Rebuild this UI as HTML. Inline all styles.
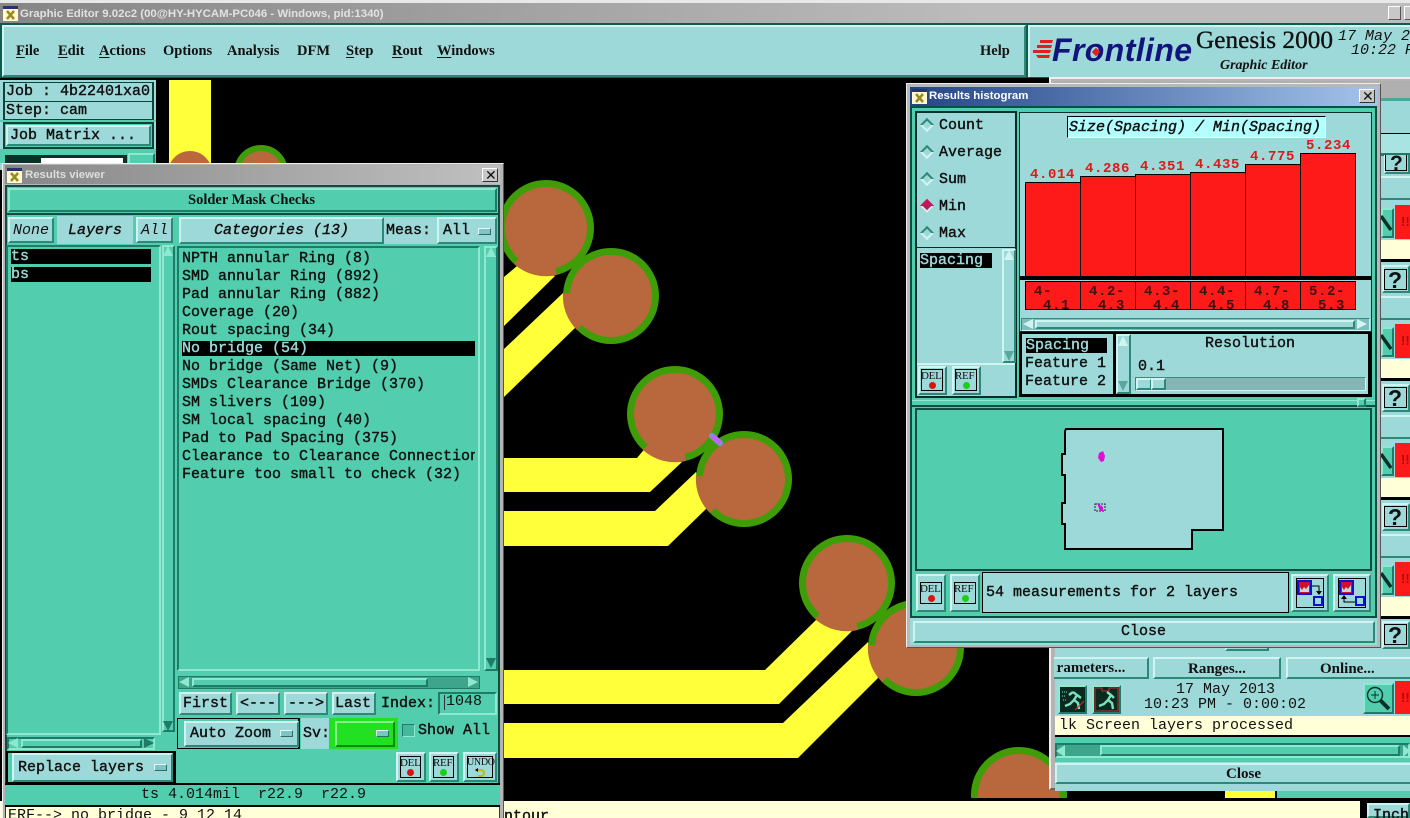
<!DOCTYPE html>
<html>
<head>
<meta charset="utf-8">
<style>
html,body{margin:0;padding:0;background:#000;}
#p{position:relative;width:1410px;height:818px;overflow:hidden;background:#000;}
#p div,#p svg,#p span.t{position:absolute;box-sizing:border-box;}
.t{white-space:pre;font:normal 15px/16px "Liberation Mono",monospace;color:#111;transform:translateY(1px);-webkit-text-stroke:.4px currentColor;}
.t[style*="font:"],.t[style*="font-weight:normal"],.val,.lab,.mi{-webkit-text-stroke:0;}
.n{font-weight:normal;-webkit-text-stroke:0;}
.i{font-style:italic;}
.l{background:#9ed9d9;}
.g{background:#52cdad;}
.y{background:#ffffd8;}
.k{background:#000;}
.bv{background:#9ed9d9;border:2px solid;border-color:#d0f4f2 #2e8878 #2e8878 #d0f4f2;}
.bg{background:#52cdad;border:2px solid;border-color:#8fe8d0 #1f7a68 #1f7a68 #8fe8d0;}
.in{background:#52cdad;border:2px solid;border-color:#1f7a68 #8fe8d0 #8fe8d0 #1f7a68;}
.dk{border:2px solid #0c4438;}
.dash{width:13px;height:7px;background:#7fc4c4;border:1px solid;border-color:#e4fbfa #2e6e60 #2e6e60 #e4fbfa;}
.tri{width:0;height:0;}
u{text-decoration:underline;text-underline-offset:2px;}
.mi{font:bold 14.5px/18px "Liberation Serif",serif;top:41px;color:#111;}
.rad{width:10px;height:10px;transform:rotate(45deg);background:#9ed9d9;border:2px solid;border-color:#2e8878 #d0f4f2 #d0f4f2 #2e8878;}
.lab{font:11px/10px "Liberation Serif",serif;color:#111;letter-spacing:-.3px;}
.red{background:#ff1a1a;}
.bar{background:#ff1a1a;border:1px solid #000;}
.val{color:#e01818;font:bold 14px/16px "Liberation Mono",monospace;letter-spacing:.6px;}
.ttl{font:bold 11.4px/16px "Liberation Sans",sans-serif;-webkit-text-stroke:0;}
.hd{stroke:#0a3028;stroke-width:3.5;}
</style>
</head>
<body>
<div id="p">

<!-- main title bar -->
<div style="left:0;top:0;width:1410px;height:3px;background:#e8e8e8"></div>
<div style="left:0;top:3px;width:1410px;height:20px;background:linear-gradient(90deg,#868686,#bcbcbc 70%,#bcbcbc)"></div>
<svg style="left:3px;top:6px" width="15" height="15" viewBox="0 0 15 15"><rect width="15" height="15" fill="#fff8d0"/><rect width="15" height="3" fill="#2a3070"/><path d="M4 5l7 8M11 5l-7 8" stroke="#9a8a20" stroke-width="2.5"/></svg>
<span class="t ttl" style="left:20px;top:5px;color:#e2e2e2;">Graphic Editor 9.02c2 (00@HY-HYCAM-PC046 - Windows, pid:1340)</span>
<div style="left:1388px;top:6px;width:13px;height:14px;background:#c8c8c8;border:1px solid;border-color:#fff #555 #555 #fff"></div>
<div style="left:1404px;top:6px;width:8px;height:14px;background:#c8c8c8;border:1px solid;border-color:#fff #555 #555 #fff"></div>

<!-- menu -->
<div style="left:0;top:23px;width:1410px;height:55px;background:#0d5c4e"></div>
<div class="l" style="left:2px;top:25px;width:1024px;height:52px;border:2px solid;border-color:#d0f4f2 #2e8878 #2e8878 #d0f4f2"></div>
<span class="t mi" style="left:16px"><u>F</u>ile</span>
<span class="t mi" style="left:58px"><u>E</u>dit</span>
<span class="t mi" style="left:99px"><u>A</u>ctions</span>
<span class="t mi" style="left:163px">Options</span>
<span class="t mi" style="left:227px">Analysis</span>
<span class="t mi" style="left:297px">DFM</span>
<span class="t mi" style="left:346px"><u>S</u>tep</span>
<span class="t mi" style="left:392px"><u>R</u>out</span>
<span class="t mi" style="left:437px"><u>W</u>indows</span>
<span class="t mi" style="left:980px">Help</span>

<!-- logo -->
<div class="l" style="left:1028px;top:25px;width:382px;height:52px;border-top:2px solid #d0f4f2;border-left:2px solid #d0f4f2"></div>
<svg style="left:1032px;top:38px" width="24" height="24" viewBox="0 0 24 24"><path d="M8 2h13l-1 3H8zM5 7h15l-1 3H5zM1 12h18l-1 3H1zM4 17h14l-1 3H6z" fill="#e02020"/></svg>
<span class="t" style="left:1052px;top:30px;font:italic bold 32px/38px 'Liberation Sans',sans-serif;color:#13137e;letter-spacing:.4px">Frontline</span>
<div style="left:1093px;top:49px;width:6px;height:6px;background:#e02020;transform:rotate(45deg)"></div>
<span class="t" style="left:1196px;top:24px;font:25.3px/30px 'Liberation Serif',serif;color:#111;-webkit-text-stroke:.35px #111">Genesis 2000</span>
<span class="t" style="left:1220px;top:57px;font:italic bold 14px/16px 'Liberation Serif',serif">Graphic Editor</span>
<span class="t" style="left:1338px;top:28px;font:italic 15px/16px 'Liberation Mono',monospace">17 May 2</span>
<span class="t" style="left:1351px;top:42px;font:italic 15px/16px 'Liberation Mono',monospace">10:22 P</span>

<!-- left column -->
<div class="l" style="left:0;top:80px;width:156px;height:90px"></div>
<div class="l dk" style="left:3px;top:82px;width:151px;height:20px;border-width:1px 2px"></div>
<span class="t" style="left:6px;top:83px">Job : 4b22401xa0</span>
<div class="l dk" style="left:3px;top:101px;width:151px;height:19px;border-width:1px 2px"></div>
<span class="t" style="left:6px;top:102px">Step: cam</span>
<div class="g" style="left:0;top:120px;width:156px;height:2px"></div>
<div class="g dk" style="left:3px;top:122px;width:151px;height:27px"></div>
<div class="bv" style="left:6px;top:125px;width:145px;height:21px"></div>
<span class="t" style="left:10px;top:127px">Job Matrix ...</span>
<div class="g" style="left:0;top:149px;width:156px;height:14px"></div>
<div style="left:5px;top:155px;width:122px;height:10px;background:#0a3028"></div>
<div style="left:41px;top:158px;width:82px;height:6px;background:#fff"></div>
<div class="bg" style="left:128px;top:153px;width:27px;height:12px"></div>

<!-- canvas -->
<svg style="left:156px;top:80px" width="1254" height="718" viewBox="156 80 1254 718">
 <rect x="156" y="80" width="1254" height="718" fill="#000"/>
 <g fill="#ffff3a">
  <rect x="169" y="80" width="42" height="90"/>
  <path d="M400 277H504L517 266L555 276L504 326H400z"/>
  <path d="M400 349H504L563 293L575 328L504 397H400z"/>
  <path d="M400 458H637L647 446L682 462L650 492H400z"/>
  <path d="M400 511H655L696 472L707 508L668 546H400z"/>
  <path d="M400 670H765L816 620L852 631L779 704H400z"/>
  <path d="M400 723H783L868 642L878 678L798 758H400z"/>
 </g>
 <circle cx="190" cy="173" r="22" fill="#b9673c"/>
 <circle cx="261" cy="172" r="27" fill="#3f9e08"/><circle cx="261" cy="172" r="21" fill="#b9673c"/>

 <g>
  <circle cx="546" cy="228" r="48" fill="#3f9e08"/>
  <circle cx="546" cy="228" r="41" fill="#b9673c"/>
  <path d="M546 228L514 264A48 48 0 0 0 557 275z" fill="#b9673c"/>
  <circle cx="611" cy="296" r="48" fill="#3f9e08"/>
  <circle cx="611" cy="296" r="41" fill="#b9673c"/>
  <path d="M611 296L563 293A48 48 0 0 0 577 330z" fill="#b9673c"/>
 </g>
 <g>
  <circle cx="675" cy="414" r="48" fill="#3f9e08"/>
  <circle cx="675" cy="414" r="41" fill="#b9673c"/>
  <path d="M675 414L643 450A48 48 0 0 0 686 461z" fill="#b9673c"/>
  <circle cx="744" cy="479" r="48" fill="#3f9e08"/>
  <circle cx="744" cy="479" r="41" fill="#b9673c"/>
  <path d="M744 479L696 476A48 48 0 0 0 710 513z" fill="#b9673c"/>
  <path d="M712 436L720 443" stroke="#6d9ad8" stroke-width="6" stroke-linecap="round"/>
  <path d="M712 436L720 443" stroke="#c463f2" stroke-width="5"/>
 </g>
 <g>
  <circle cx="847" cy="583" r="48" fill="#3f9e08"/>
  <circle cx="847" cy="583" r="41" fill="#b9673c"/>
  <path d="M847 583L815 619A48 48 0 0 0 858 630z" fill="#b9673c"/>
  <circle cx="916" cy="648" r="48" fill="#3f9e08"/>
  <circle cx="916" cy="648" r="41" fill="#b9673c"/>
  <path d="M916 648L868 645A48 48 0 0 0 882 682z" fill="#b9673c"/>
 </g>
 <circle cx="1019" cy="795" r="48" fill="#3f9e08"/>
 <circle cx="1019" cy="795" r="41" fill="#b9673c"/>
</svg>

<!-- bottom bar behind -->
<div style="left:0;top:798px;width:1410px;height:3px;background:#000"></div>
<div class="y" style="left:0;top:801px;width:1360px;height:17px"></div>
<span class="t" style="left:504px;top:808px">ntour</span>
<div class="k" style="left:1360px;top:798px;width:50px;height:20px"></div>
<div class="bv" style="left:1367px;top:803px;width:43px;height:15px"></div>
<span class="t" style="left:1373px;top:807px">Inch</span>

<!-- second window (behind histogram) -->
<div style="left:1049px;top:77px;width:361px;height:713px;background:#b4b4b4;border-top:2px solid #eee;border-left:2px solid #eee;border-bottom:2px solid #666"></div>
<div style="left:1055px;top:81px;width:355px;height:17px;background:#b0b0b0"></div>
<div style="left:1055px;top:98px;width:355px;height:3px;background:#4aa898"></div>
<div style="left:1055px;top:101px;width:355px;height:690px;background:#9ed9d9"></div>
<div class="k" style="left:1381px;top:133px;width:29px;height:1px"></div>
<div style="left:1381px;top:134px;width:29px;height:19px;background:#a8e4e2"></div>

<!-- strip rows -->
<div style="left:1381px;top:153px;width:29px;height:3px;background:#1f7a68"></div>
<div class="bv" style="left:1384px;top:155px;width:26px;height:19px;border-top:0"></div>
<div style="left:1385px;top:155px;width:22px;height:16px;border:1px solid #000;border-top:0"></div>
<span class="t" style="left:1390px;top:152px;font:bold 21px/21px 'Liberation Sans',sans-serif;overflow:hidden">?</span>
<div class="l" style="left:1381px;top:176px;width:29px;height:24px;border-top:2px solid #d0f4f2;border-bottom:2px solid #2e8878"></div>

<div class="bg" style="left:1381px;top:208px;width:13px;height:30px"></div>
<svg style="left:1381px;top:208px" width="13" height="30" viewBox="0 0 13 30"><path class="hd" d="M0 8L10 22"/></svg>
<div class="red" style="left:1395px;top:205px;width:15px;height:34px"></div>
<span class="t" style="left:1401px;top:214px;color:#a01010;font:bold 13px/14px 'Liberation Sans',sans-serif">!!</span>
<div class="y" style="left:1381px;top:240px;width:29px;height:19px"></div>
<div class="k" style="left:1381px;top:259px;width:29px;height:3px"></div>
<div class="bv" style="left:1382px;top:265px;width:28px;height:28px"></div>
<div style="left:1384px;top:269px;width:23px;height:21px;border:1px solid #000"></div>
<span class="t" style="left:1388px;top:268px;font:bold 23px/23px 'Liberation Sans',sans-serif">?</span>
<div class="l" style="left:1381px;top:296px;width:29px;height:24px;border-top:2px solid #d0f4f2;border-bottom:2px solid #2e8878"></div>

<div class="bg" style="left:1381px;top:327px;width:13px;height:30px"></div>
<svg style="left:1381px;top:327px" width="13" height="30" viewBox="0 0 13 30"><path class="hd" d="M0 8L10 22"/></svg>
<div class="red" style="left:1395px;top:324px;width:15px;height:34px"></div>
<span class="t" style="left:1401px;top:333px;color:#a01010;font:bold 13px/14px 'Liberation Sans',sans-serif">!!</span>
<div class="y" style="left:1381px;top:359px;width:29px;height:19px"></div>
<div class="k" style="left:1381px;top:378px;width:29px;height:3px"></div>
<div class="bv" style="left:1382px;top:384px;width:28px;height:28px"></div>
<div style="left:1384px;top:387px;width:23px;height:21px;border:1px solid #000"></div>
<span class="t" style="left:1388px;top:386px;font:bold 23px/23px 'Liberation Sans',sans-serif">?</span>
<div class="l" style="left:1381px;top:415px;width:29px;height:24px;border-top:2px solid #d0f4f2;border-bottom:2px solid #2e8878"></div>

<div class="bg" style="left:1381px;top:446px;width:13px;height:30px"></div>
<svg style="left:1381px;top:446px" width="13" height="30" viewBox="0 0 13 30"><path class="hd" d="M0 8L10 22"/></svg>
<div class="red" style="left:1395px;top:443px;width:15px;height:34px"></div>
<span class="t" style="left:1401px;top:452px;color:#a01010;font:bold 13px/14px 'Liberation Sans',sans-serif">!!</span>
<div class="y" style="left:1381px;top:478px;width:29px;height:19px"></div>
<div class="k" style="left:1381px;top:497px;width:29px;height:3px"></div>
<div class="bv" style="left:1382px;top:503px;width:28px;height:28px"></div>
<div style="left:1384px;top:506px;width:23px;height:21px;border:1px solid #000"></div>
<span class="t" style="left:1388px;top:505px;font:bold 23px/23px 'Liberation Sans',sans-serif">?</span>
<div class="l" style="left:1381px;top:534px;width:29px;height:24px;border-top:2px solid #d0f4f2;border-bottom:2px solid #2e8878"></div>

<div class="bg" style="left:1381px;top:565px;width:13px;height:30px"></div>
<svg style="left:1381px;top:565px" width="13" height="30" viewBox="0 0 13 30"><path class="hd" d="M0 8L10 22"/></svg>
<div class="red" style="left:1395px;top:562px;width:15px;height:34px"></div>
<span class="t" style="left:1401px;top:571px;color:#a01010;font:bold 13px/14px 'Liberation Sans',sans-serif">!!</span>
<div class="y" style="left:1381px;top:597px;width:29px;height:19px"></div>
<div class="k" style="left:1381px;top:616px;width:29px;height:3px"></div>
<div class="bv" style="left:1382px;top:621px;width:28px;height:28px"></div>
<div style="left:1384px;top:624px;width:23px;height:21px;border:1px solid #000"></div>
<span class="t" style="left:1388px;top:623px;font:bold 23px/23px 'Liberation Sans',sans-serif">?</span>

<!-- second window lower -->
<div class="bv" style="left:1225px;top:640px;width:44px;height:11px"></div>
<div class="bv" style="left:1054px;top:657px;width:95px;height:22px;border-left:0"></div>
<div style="left:1056px;top:658px;width:90px;height:20px;overflow:hidden"><span class="t" style="left:-16px;top:0;position:absolute;font:bold 15px/18px 'Liberation Serif',serif">Parameters...</span></div>
<div class="bv" style="left:1153px;top:657px;width:128px;height:22px"></div>
<span class="t" style="left:1188px;top:659px;font:bold 15px/18px 'Liberation Serif',serif">Ranges...</span>
<div class="bv" style="left:1286px;top:657px;width:124px;height:22px;border-right:0"></div>
<span class="t" style="left:1320px;top:659px;font:bold 15px/18px 'Liberation Serif',serif">Online...</span>

<div class="bg" style="left:1058px;top:685px;width:29px;height:29px"></div>
<svg style="left:1060px;top:687px" width="25" height="25" viewBox="0 0 25 25"><rect width="25" height="25" fill="#0a2a20"/><path d="M13 5l4 3-3 5 4 3 1 6M14 13l-4 4-5 2M17 8l4 3M13 5l-4 3" stroke="#7fe0c0" stroke-width="2.4" fill="none"/><path d="M2 5h6M2 9h4M3 13h3" stroke="#7fe0c0" stroke-dasharray="1 1"/><path d="M15 23L24 14" stroke="#d03030"/></svg>
<div class="bg" style="left:1092px;top:685px;width:29px;height:29px"></div>
<svg style="left:1094px;top:687px" width="25" height="25" viewBox="0 0 25 25"><rect width="25" height="25" fill="#0a2a20"/><path d="M1 1h7v3h7V1h9v23H1z" fill="none" stroke="#c03030"/><path d="M13 5l4 3-3 5 4 3 1 6M14 13l-4 4-5 2M17 8l3 3" stroke="#7fe0c0" stroke-width="2.4" fill="none"/></svg>
<span class="t n" style="left:1176px;top:681px">17 May 2013</span>
<span class="t n" style="left:1144px;top:696px">10:23 PM - 0:00:02</span>
<div class="bg" style="left:1363px;top:683px;width:31px;height:31px"></div>
<svg style="left:1366px;top:686px" width="25" height="25" viewBox="0 0 25 25"><circle cx="9" cy="9" r="7.5" fill="none" stroke="#0a3028" stroke-width="1.4"/><path d="M5 9h8M9 5v8" stroke="#0a3028"/><path d="M14 14l9 9" stroke="#0a3028" stroke-width="4"/></svg>
<div class="red" style="left:1395px;top:681px;width:15px;height:33px"></div>
<span class="t" style="left:1401px;top:690px;color:#a01010;font:bold 13px/14px 'Liberation Sans',sans-serif">!!</span>
<div class="y" style="left:1055px;top:716px;width:355px;height:19px"></div>
<span class="t n" style="left:1059px;top:717px">lk Screen layers processed</span>
<div class="k" style="left:1055px;top:735px;width:355px;height:2px"></div>
<div class="g" style="left:1055px;top:737px;width:355px;height:25px"></div>
<div style="left:1055px;top:743px;width:355px;height:15px;background:#3ea58d;border:2px solid;border-color:#1f7a68 #8fe8d0 #8fe8d0 #1f7a68"></div>
<div class="bg" style="left:1100px;top:745px;width:300px;height:11px"></div>
<div class="tri" style="left:1056px;top:745px;border:6px solid transparent;border-right:9px solid #8fe8d0;border-left:0"></div>
<div class="tri" style="left:1403px;top:745px;border:6px solid transparent;border-left:7px solid #8fe8d0;border-right:0"></div>
<div class="bv" style="left:1055px;top:763px;width:355px;height:21px;border-right:0"></div>
<span class="t" style="left:1226px;top:764px;font:bold 15px/18px 'Liberation Serif',serif">Close</span>
<div style="left:1225px;top:791px;width:50px;height:7px;background:#ffff3a"></div>
<div class="g" style="left:1277px;top:791px;width:133px;height:7px"></div>

<!-- ============= RESULTS VIEWER ============= -->
<div style="left:2px;top:163px;width:502px;height:660px;background:#b4b4b4;border:1px solid;border-color:#eee #555 #555 #eee"></div>
<div style="left:5px;top:165px;width:495px;height:19px;background:linear-gradient(90deg,#878787,#c0c0c0)"></div>
<svg style="left:7px;top:168px" width="15" height="15" viewBox="0 0 15 15"><rect width="15" height="15" fill="#fff8d0"/><rect width="15" height="3" fill="#2a3070"/><path d="M4 5l7 8M11 5l-7 8" stroke="#9a8a20" stroke-width="2.5"/></svg>
<span class="t ttl" style="left:25px;top:166px;color:#dedede">Results viewer</span>
<div style="left:482px;top:168px;width:16px;height:14px;background:#c8c8c8;border:1px solid;border-color:#fff #333 #333 #fff"></div>
<span class="t" style="left:485px;top:167px;font:14px/14px 'Liberation Sans',sans-serif">✕</span>

<div class="g" style="left:5px;top:185px;width:495px;height:633px;border:2px solid #0d4e42"></div>
<div class="bg" style="left:8px;top:188px;width:489px;height:24px"></div>
<span class="t" style="left:188px;top:190px;font:bold 14.5px/18px 'Liberation Serif',serif">Solder Mask Checks</span>
<div style="left:5px;top:213px;width:495px;height:2px;background:#0d4e42"></div>

<!-- layers header -->
<div class="bv" style="left:8px;top:217px;width:46px;height:26px"></div>
<span class="t i n" style="left:13px;top:222px">None</span>
<div class="l" style="left:57px;top:216px;width:76px;height:28px"></div>
<span class="t i" style="left:68px;top:222px">Layers</span>
<div class="bv" style="left:136px;top:217px;width:37px;height:26px"></div>
<span class="t i n" style="left:141px;top:222px">All</span>

<!-- layers list -->
<div class="in" style="left:6px;top:245px;width:155px;height:490px"></div>
<div class="k" style="left:11px;top:249px;width:140px;height:15px"></div>
<span class="t" style="left:11px;top:248px;color:#9ed9d9">ts</span>
<div class="k" style="left:11px;top:267px;width:140px;height:15px"></div>
<span class="t" style="left:11px;top:266px;color:#9ed9d9">bs</span>
<div class="bg" style="left:162px;top:245px;width:13px;height:487px"></div>
<div class="tri" style="left:163px;top:246px;border:5px solid transparent;border-bottom:10px solid #8fe8d0;border-top:0"></div>
<div class="tri" style="left:163px;top:721px;border:5px solid transparent;border-top:10px solid #1f7a68;border-bottom:0"></div>
<div class="in" style="left:7px;top:737px;width:148px;height:13px"></div>
<div class="bg" style="left:21px;top:739px;width:121px;height:9px"></div>
<div class="tri" style="left:8px;top:738px;border:5px solid transparent;border-right:10px solid #8fe8d0;border-left:0"></div>
<div class="tri" style="left:144px;top:738px;border:5px solid transparent;border-left:10px solid #1f7a68;border-right:0"></div>

<!-- replace layers -->
<div style="left:6px;top:751px;width:170px;height:33px;background:#52cdad;border:2px solid #000;border-right-width:3px"></div>
<div class="bv" style="left:12px;top:753px;width:161px;height:29px"></div>
<span class="t" style="left:18px;top:759px">Replace layers</span>
<div class="dash" style="left:154px;top:764px"></div>

<!-- categories -->
<div class="bv" style="left:179px;top:217px;width:205px;height:27px"></div>
<span class="t i" style="left:214px;top:222px">Categories (13)</span>
<div class="l" style="left:384px;top:217px;width:53px;height:27px"></div>
<span class="t" style="left:386px;top:222px">Meas:</span>
<div class="bv" style="left:437px;top:217px;width:60px;height:27px"></div>
<span class="t" style="left:443px;top:222px">All</span>
<div class="dash" style="left:478px;top:228px"></div>

<div class="in" style="left:177px;top:246px;width:303px;height:425px"></div>
<span class="t" style="left:182px;top:250px">NPTH annular Ring (8)</span>
<span class="t" style="left:182px;top:268px">SMD annular Ring (892)</span>
<span class="t" style="left:182px;top:286px">Pad annular Ring (882)</span>
<span class="t" style="left:182px;top:304px">Coverage (20)</span>
<span class="t" style="left:182px;top:322px">Rout spacing (34)</span>
<div class="k" style="left:182px;top:341px;width:293px;height:15px"></div>
<span class="t" style="left:182px;top:340px;color:#9ed9d9">No bridge (54)</span>
<span class="t" style="left:182px;top:358px">No bridge (Same Net) (9)</span>
<span class="t" style="left:182px;top:376px">SMDs Clearance Bridge (370)</span>
<span class="t" style="left:182px;top:394px">SM slivers (109)</span>
<span class="t" style="left:182px;top:412px">SM local spacing (40)</span>
<span class="t" style="left:182px;top:430px">Pad to Pad Spacing (375)</span>
<div style="left:182px;top:448px;width:293px;height:18px;overflow:hidden"><span class="t" style="left:0;top:0;position:absolute">Clearance to Clearance Connection</span></div>
<span class="t" style="left:182px;top:466px">Feature too small to check (32)</span>
<div class="bg" style="left:484px;top:246px;width:14px;height:425px"></div>
<div class="tri" style="left:486px;top:247px;border:5px solid transparent;border-bottom:10px solid #8fe8d0;border-top:0"></div>
<div class="tri" style="left:486px;top:658px;border:5px solid transparent;border-top:10px solid #1f7a68;border-bottom:0"></div>

<div style="left:178px;top:676px;width:302px;height:13px;background:#3ea58d;border:1px solid #1f7a68"></div>
<div class="bg" style="left:192px;top:678px;width:236px;height:9px"></div>
<div class="tri" style="left:179px;top:677px;border:5px solid transparent;border-right:10px solid #8fe8d0;border-left:0"></div>
<div class="tri" style="left:468px;top:677px;border:5px solid transparent;border-left:10px solid #8fe8d0;border-right:0"></div>

<!-- nav -->
<div class="bv" style="left:179px;top:692px;width:53px;height:23px"></div><span class="t" style="left:183px;top:695px">First</span>
<div class="bv" style="left:236px;top:692px;width:44px;height:23px"></div><span class="t" style="left:240px;top:695px">&lt;---</span>
<div class="bv" style="left:284px;top:692px;width:44px;height:23px"></div><span class="t" style="left:288px;top:695px">---&gt;</span>
<div class="bv" style="left:332px;top:692px;width:44px;height:23px"></div><span class="t" style="left:335px;top:695px">Last</span>
<span class="t" style="left:381px;top:695px">Index:</span>
<div class="in" style="left:438px;top:692px;width:59px;height:23px"></div>
<span class="t n" style="left:446px;top:693px">1048</span>
<div style="left:444px;top:695px;width:1px;height:15px;background:#333"></div>

<!-- auto zoom -->
<div style="left:177px;top:718px;width:123px;height:31px;border:1px solid #000;border-right:2px solid #000;background:#52cdad"></div>
<div class="bv" style="left:184px;top:721px;width:115px;height:26px"></div>
<span class="t" style="left:190px;top:725px">Auto Zoom</span>
<div class="dash" style="left:280px;top:730px"></div>
<div class="l" style="left:301px;top:718px;width:28px;height:31px"></div>
<span class="t" style="left:303px;top:725px">Sv:</span>
<div style="left:329px;top:718px;width:69px;height:31px;background:#22e022"></div>
<div style="left:335px;top:721px;width:60px;height:26px;background:#22e022;border:2px solid;border-color:#8bf08b #0c8a0c #0c8a0c #8bf08b"></div>
<div class="dash" style="left:376px;top:730px"></div>
<div style="left:402px;top:724px;width:13px;height:13px;background:#46b99d;border:1px solid;border-color:#1f7a68 #8fe8d0 #8fe8d0 #1f7a68"></div>
<span class="t" style="left:418px;top:722px">Show All</span>

<!-- del ref undo -->
<div class="bv" style="left:396px;top:752px;width:30px;height:30px"></div>
<div style="left:400px;top:756px;width:21px;height:22px;border:1px solid #000"></div>
<span class="t lab" style="left:400px;top:757px">DEL</span>
<div style="left:407px;top:769px;width:7px;height:7px;border-radius:50%;background:#e01010"></div>
<div class="bv" style="left:429px;top:752px;width:30px;height:30px"></div>
<div style="left:433px;top:756px;width:21px;height:22px;border:1px solid #000"></div>
<span class="t lab" style="left:433px;top:757px">REF</span>
<div style="left:440px;top:769px;width:7px;height:7px;border-radius:50%;background:#18d018"></div>
<div class="bv" style="left:463px;top:752px;width:34px;height:30px"></div>
<div style="left:467px;top:756px;width:26px;height:22px;border:1px solid #000"></div>
<span class="t lab" style="left:467px;top:757px;font-size:10px">UNDO</span>
<svg style="left:474px;top:767px" width="12" height="11" viewBox="0 0 12 11"><path d="M2 3h5a3 3 0 0 1 0 6H4" fill="none" stroke="#c8b800" stroke-width="2"/><path d="M1 3l3-2v4z" fill="#000"/></svg>

<!-- status -->
<div class="k" style="left:5px;top:783px;width:495px;height:2px"></div>
<div class="g" style="left:5px;top:785px;width:495px;height:20px"></div>
<span class="t n" style="left:141px;top:786px">ts 4.014mil  r22.9  r22.9</span>
<div class="k" style="left:5px;top:805px;width:495px;height:2px"></div>
<div class="y" style="left:6px;top:807px;width:493px;height:11px"></div>
<span class="t n" style="left:8px;top:807px">ERF--&gt; no bridge - 9 12 14</span>

<!-- ============= HISTOGRAM ============= -->
<div style="left:906px;top:83px;width:475px;height:565px;background:#b8b8b8;border:1px solid;border-color:#eee #555 #555 #eee"></div>
<div style="left:910px;top:87px;width:467px;height:19px;background:linear-gradient(90deg,#244488,#a4c4ec)"></div>
<svg style="left:912px;top:89px" width="15" height="15" viewBox="0 0 15 15"><rect width="15" height="15" fill="#fff8d0"/><rect width="15" height="3" fill="#2a3070"/><path d="M4 5l7 8M11 5l-7 8" stroke="#9a8a20" stroke-width="2.5"/></svg>
<span class="t ttl" style="left:929px;top:87px;color:#fff">Results histogram</span>
<div style="left:1359px;top:89px;width:16px;height:14px;background:#c8c8c8;border:1px solid;border-color:#fff #333 #333 #fff"></div>
<span class="t" style="left:1362px;top:88px;font:14px/14px 'Liberation Sans',sans-serif">✕</span>

<div class="g" style="left:910px;top:106px;width:467px;height:512px;border:2px solid #0d4e42"></div>

<!-- radios -->
<div class="l" style="left:915px;top:111px;width:102px;height:138px;border:2px solid #0c2e28"></div>
<div class="rad" style="left:922px;top:120px"></div><span class="t" style="left:939px;top:117px">Count</span>
<div class="rad" style="left:922px;top:147px"></div><span class="t" style="left:939px;top:144px">Average</span>
<div class="rad" style="left:922px;top:174px"></div><span class="t" style="left:939px;top:171px">Sum</span>
<div class="rad" style="left:922px;top:201px;background:#c0185a;border-color:#c0185a #d0f4f2 #d0f4f2 #c0185a"></div><span class="t" style="left:939px;top:198px">Min</span>
<div class="rad" style="left:922px;top:228px"></div><span class="t" style="left:939px;top:225px">Max</span>

<!-- list -->
<div class="l" style="left:915px;top:248px;width:102px;height:150px;border:2px solid #0c2e28;border-top:0"></div>
<div class="k" style="left:920px;top:253px;width:72px;height:15px"></div>
<span class="t" style="left:920px;top:252px;color:#9ed9d9">Spacing</span>
<div style="left:917px;top:363px;width:98px;height:2px;background:#d0f4f2"></div>
<div class="bv" style="left:1002px;top:249px;width:14px;height:114px"></div>
<div class="tri" style="left:1004px;top:250px;border:5px solid transparent;border-bottom:10px solid #d0f4f2;border-top:0"></div>
<div class="tri" style="left:1004px;top:351px;border:5px solid transparent;border-top:10px solid #5aa89c;border-bottom:0"></div>
<div class="bv" style="left:918px;top:366px;width:29px;height:29px"></div>
<div style="left:921px;top:369px;width:22px;height:22px;border:1px solid #000"></div>
<span class="t lab" style="left:921px;top:370px">DEL</span>
<div style="left:929px;top:382px;width:7px;height:7px;border-radius:50%;background:#e01010"></div>
<div class="bv" style="left:952px;top:366px;width:29px;height:29px"></div>
<div style="left:955px;top:369px;width:22px;height:22px;border:1px solid #000"></div>
<span class="t lab" style="left:955px;top:370px">REF</span>
<div style="left:963px;top:382px;width:7px;height:7px;border-radius:50%;background:#18d018"></div>

<!-- chart -->
<div class="l" style="left:1019px;top:112px;width:353px;height:220px;border:1px solid #0c2e28"></div>
<div style="left:1067px;top:116px;width:259px;height:22px;background:#b3ffff;border:1px solid;border-color:#000 #fff #fff #000"></div>
<span class="t i" style="left:1069px;top:119px">Size(Spacing) / Min(Spacing)</span>
<div class="bar" style="left:1025px;top:182px;width:56px;height:95px"></div>
<div class="bar" style="left:1080px;top:176px;width:56px;height:101px"></div>
<div class="bar" style="left:1135px;top:174px;width:56px;height:103px"></div>
<div class="bar" style="left:1190px;top:172px;width:56px;height:105px"></div>
<div class="bar" style="left:1245px;top:164px;width:56px;height:113px"></div>
<div class="bar" style="left:1300px;top:153px;width:56px;height:124px"></div>
<span class="t val" style="left:1030px;top:166px">4.014</span>
<span class="t val" style="left:1085px;top:160px">4.286</span>
<span class="t val" style="left:1140px;top:158px">4.351</span>
<span class="t val" style="left:1195px;top:156px">4.435</span>
<span class="t val" style="left:1250px;top:148px">4.775</span>
<span class="t val" style="left:1306px;top:137px">5.234</span>
<div class="k" style="left:1020px;top:276px;width:351px;height:4px"></div>
<div class="red" style="left:1025px;top:281px;width:331px;height:29px;border:1px solid #000"></div>
<div class="k" style="left:1080px;top:281px;width:1px;height:29px"></div>
<div class="k" style="left:1135px;top:281px;width:1px;height:29px"></div>
<div class="k" style="left:1190px;top:281px;width:1px;height:29px"></div>
<div class="k" style="left:1245px;top:281px;width:1px;height:29px"></div>
<div class="k" style="left:1300px;top:281px;width:1px;height:29px"></div>
<span class="t val" style="left:1034px;top:283px;color:#401010">4-</span>
<span class="t val" style="left:1089px;top:283px;color:#401010">4.2-</span>
<span class="t val" style="left:1144px;top:283px;color:#401010">4.3-</span>
<span class="t val" style="left:1199px;top:283px;color:#401010">4.4-</span>
<span class="t val" style="left:1254px;top:283px;color:#401010">4.7-</span>
<span class="t val" style="left:1309px;top:283px;color:#401010">5.2-</span>
<div style="left:1025px;top:297px;width:331px;height:12px;overflow:hidden">
<span class="t val" style="left:18px;top:0;color:#401010;position:absolute">4.1</span>
<span class="t val" style="left:73px;top:0;color:#401010;position:absolute">4.3</span>
<span class="t val" style="left:128px;top:0;color:#401010;position:absolute">4.4</span>
<span class="t val" style="left:183px;top:0;color:#401010;position:absolute">4.5</span>
<span class="t val" style="left:238px;top:0;color:#401010;position:absolute">4.8</span>
<span class="t val" style="left:293px;top:0;color:#401010;position:absolute">5.3</span>
</div>
<div style="left:1021px;top:318px;width:349px;height:13px;background:#7fbcbc;border:1px solid;border-color:#3a8a80 #d0f4f2 #d0f4f2 #3a8a80"></div>
<div class="bv" style="left:1035px;top:320px;width:320px;height:9px"></div>
<div class="tri" style="left:1023px;top:319px;border:5px solid transparent;border-right:10px solid #d0f4f2;border-left:0"></div>
<div class="tri" style="left:1357px;top:319px;border:5px solid transparent;border-left:10px solid #d0f4f2;border-right:0"></div>

<!-- lower -->
<div class="k" style="left:1019px;top:332px;width:353px;height:65px"></div>
<div class="l" style="left:1022px;top:334px;width:91px;height:60px"></div>
<div class="k" style="left:1026px;top:338px;width:81px;height:15px"></div>
<span class="t" style="left:1026px;top:337px;color:#9ed9d9">Spacing</span>
<span class="t" style="left:1025px;top:355px">Feature 1</span>
<span class="t" style="left:1025px;top:373px">Feature 2</span>
<div class="bv" style="left:1116px;top:334px;width:15px;height:60px"></div>
<div class="tri" style="left:1118px;top:336px;border:5px solid transparent;border-bottom:10px solid #d0f4f2;border-top:0"></div>
<div class="tri" style="left:1118px;top:381px;border:5px solid transparent;border-top:10px solid #5aa89c;border-bottom:0"></div>
<div class="l" style="left:1131px;top:334px;width:237px;height:60px"></div>
<span class="t" style="left:1205px;top:335px">Resolution</span>
<span class="t" style="left:1138px;top:358px">0.1</span>
<div style="left:1135px;top:377px;width:231px;height:14px;background:#85b5b5;border:1px solid;border-color:#3a8a80 #d0f4f2 #d0f4f2 #3a8a80"></div>
<div class="bv" style="left:1136px;top:378px;width:16px;height:12px"></div>
<div class="bv" style="left:1151px;top:378px;width:15px;height:12px"></div>

<!-- sash -->
<div style="left:912px;top:400px;width:463px;height:7px;background:#52cdad;border-top:1px solid #8fe8d0;border-bottom:2px solid #0d4e42"></div>
<div class="bg" style="left:1357px;top:398px;width:9px;height:9px"></div>

<!-- graphic -->
<div class="g" style="left:915px;top:408px;width:457px;height:163px;border:2px solid #0d4e42"></div>
<svg style="left:1055px;top:420px" width="180" height="140" viewBox="1055 420 180 140">
 <path d="M1066 429H1223V530H1192V549H1065V524H1062V503H1065V475H1062V454H1065V431z" fill="#9ed9d9" stroke="#000" stroke-width="2"/>
 <path d="M1099 453l4-2 2 5-1 5-3 1-3-4z" fill="#e010d8"/>
 <rect x="1095" y="504" width="10" height="7" fill="none" stroke="#222" stroke-dasharray="2 1"/>
 <path d="M1097 503l6 4v4h-3z" fill="#d010e0"/>
</svg>

<!-- footer -->
<div class="bv" style="left:916px;top:574px;width:30px;height:38px"></div>
<div style="left:920px;top:582px;width:22px;height:22px;border:1px solid #000"></div>
<span class="t lab" style="left:920px;top:583px">DEL</span>
<div style="left:928px;top:595px;width:7px;height:7px;border-radius:50%;background:#e01010"></div>
<div class="bv" style="left:950px;top:574px;width:30px;height:38px"></div>
<div style="left:954px;top:582px;width:22px;height:22px;border:1px solid #000"></div>
<span class="t lab" style="left:954px;top:583px">REF</span>
<div style="left:962px;top:595px;width:7px;height:7px;border-radius:50%;background:#18d018"></div>
<div class="l" style="left:982px;top:572px;width:307px;height:41px;border:1px solid #000"></div>
<span class="t" style="left:986px;top:584px">54 measurements for 2 layers</span>
<div class="bv" style="left:1291px;top:574px;width:38px;height:38px"></div>
<svg style="left:1296px;top:578px" width="28" height="30" viewBox="0 0 28 30"><rect x=".5" y=".5" width="27" height="29" fill="none" stroke="#000"/><rect x="2" y="3" width="13" height="13" fill="#d0102a" stroke="#1010d0" stroke-width="2"/><path d="M4 14V9l2 3 2-3 2 2 3-4v7z" fill="#c8d4d8"/><path d="M16 8h7v7" fill="none" stroke="#000"/><path d="M20 13h6l-3 4z" fill="#000"/><rect x="18" y="19" width="8" height="8" fill="none" stroke="#1010d0" stroke-width="2"/></svg>
<div class="bv" style="left:1333px;top:574px;width:38px;height:38px"></div>
<svg style="left:1338px;top:578px" width="28" height="30" viewBox="0 0 28 30"><rect x=".5" y=".5" width="27" height="29" fill="none" stroke="#000"/><rect x="2" y="3" width="13" height="13" fill="#d0102a" stroke="#1010d0" stroke-width="2"/><path d="M4 14V9l2 3 2-3 2 2 3-4v7z" fill="#c8d4d8"/><path d="M6 20v4h11" fill="none" stroke="#000"/><path d="M3 21h6l-3-4z" fill="#000"/><rect x="18" y="19" width="8" height="8" fill="none" stroke="#1010d0" stroke-width="2"/></svg>

<div class="l" style="left:910px;top:618px;width:467px;height:27px"></div>
<div class="bv" style="left:913px;top:621px;width:462px;height:22px"></div>
<span class="t" style="left:1121px;top:623px">Close</span>

</div>
</body>
</html>
